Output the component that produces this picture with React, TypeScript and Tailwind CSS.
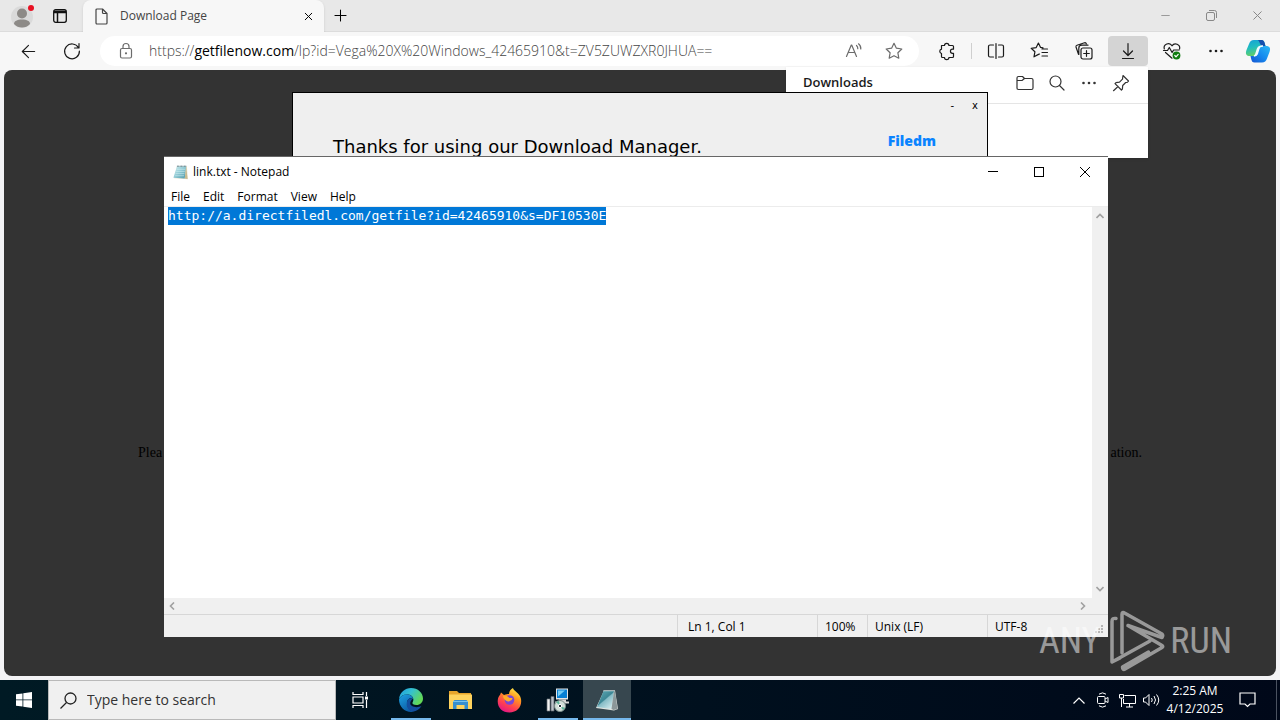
import { useEffect, useRef } from "react";
import type { ReactNode } from "react";
import { ArrowLeft, Minus, Plus, X } from "lucide-react";

type IconProps = { children: ReactNode; size?: number; width?: number; className?: string };

function Icon({ children, size = 20, width = 1.2, className }: IconProps) {
    return (
        <svg
            width={size}
            height={size}
            viewBox="0 0 20 20"
            fill="none"
            stroke="currentColor"
            strokeWidth={width}
            strokeLinecap="round"
            strokeLinejoin="round"
            className={className}
            aria-hidden="true"
        >
            {children}
        </svg>
    );
}

function ToolButton({ label, active, children }: { label: string; active?: boolean; children: ReactNode }) {
    return (
        <button
            aria-label={label}
            className={`flex h-[30px] w-10 shrink-0 items-center justify-center rounded ${active ? "bg-[#d4d4d4]" : ""}`}
        >
            {children}
        </button>
    );
}

function Dots() {
    return (
        <Icon>
            <g fill="currentColor" stroke="none">
                <circle cx="4.5" cy="10" r="1.3" />
                <circle cx="10" cy="10" r="1.3" />
                <circle cx="15.5" cy="10" r="1.3" />
            </g>
        </Icon>
    );
}

function RestoreIcon({ className }: { className?: string }) {
    return (
        <svg width="11" height="11" viewBox="0 0 11 11" fill="none" stroke="currentColor" className={className} aria-hidden="true">
            <rect x="0.5" y="2.5" width="8" height="8" rx="1.5" />
            <path d="M3 .5h5.5a2 2 0 0 1 2 2V8" />
        </svg>
    );
}

function CopilotLogo() {
    return (
        <svg width="26" height="26" viewBox="0 0 26 26" aria-hidden="true">
            <defs>
                <linearGradient id="cp1" x1="0" y1="0" x2="0.3" y2="1">
                    <stop offset="0" stopColor="#159fd8" />
                    <stop offset="0.5" stopColor="#20bdc0" />
                    <stop offset="1" stopColor="#63cf67" />
                </linearGradient>
                <linearGradient id="cp2" x1="1" y1="0" x2="0" y2="1">
                    <stop offset="0" stopColor="#2bb9f4" />
                    <stop offset="0.5" stopColor="#168bef" />
                    <stop offset="1" stopColor="#1454d1" />
                </linearGradient>
            </defs>
            <path d="M16.500 2c2 0 2.700 1.300 3.300 3.600L20.500 8h-3.200c-2.100 0-2.900 1-3.500 3l-1.500 4.500C11.500 17.500 10 18 7.500 18H5c-3.500 0-5-2-3.500-6L4 6c1-2.800 2.200-4 5-4Z" fill="url(#cp1)" />
            <path d="M9.500 24.500c-2 0-2.700-1.300-3.300-3.600L5.500 18h3.200c2.100 0 2.900-1 3.500-3l1.500-4.500c.8-2 2.200-2.500 4.800-2.500H21c3.500 0 5 2 3.500 6L22 20.500c-1 2.800-2.200 4-5 4Z" fill="url(#cp2)" />
            <path d="M9 2h7.500c2 0 2.700 1.300 3.300 3.600L20.500 8h-3.200c-2.500 0-2.500-6-5-6Z" fill="#164fae" />
            <path d="M15 8.500c1-.5 2-.5 3-.5h-1c-2 0-2.700 1-3.300 3l-1.500 5c-.6 1.500-1.600 2-3.200 2 1.500-.5 1.700-1.500 2.200-3l1.300-4c.4-1.300 1.200-2.200 2.500-2.500Z" fill="#f1fcff" stroke="#f1fcff" strokeWidth="1.500" />
        </svg>
    );
}

function TabStrip() {
    return (
        <div className="flex h-8 shrink-0 items-stretch border-b border-[#dcdcdc] bg-[#e8e8e8]">
            <button aria-label="Profile" className="flex w-11 items-center justify-center">
                <svg width="24" height="24" viewBox="0 0 24 24" aria-hidden="true">
                    <circle cx="12" cy="13" r="11" fill="#dadada" />
                    <circle cx="12" cy="9.500" r="5" fill="#8d8a87" />
                    <path d="M4 20c0-3 3-4.500 8-4.500s8 1.500 8 4.500c-2 2.500-5 3.500-8 3.500S6 22.500 4 20Z" fill="#8d8a87" />
                    <circle cx="21" cy="4" r="3" fill="#e81123" />
                </svg>
            </button>
            <button aria-label="Tab actions" className="flex w-8 items-center justify-center">
                <svg width="14" height="14" viewBox="0 0 14 14" fill="none" stroke="#111" strokeWidth="1.300" aria-hidden="true">
                    <rect x="0.700" y="0.700" width="12.600" height="12.600" rx="2" />
                    <path d="M1 2.300h12M1 3.500h12M4.500 4v9" strokeWidth="1.500" />
                </svg>
            </button>
            <div className="-mb-px ml-[7px] flex w-[241px] items-center rounded-t-lg bg-[#f7f7f7] pl-3 shadow-sm">
                <svg width="13" height="17" viewBox="0 0 13 17" fill="none" stroke="#444" strokeWidth="1.200" strokeLinejoin="round" aria-hidden="true">
                    <path d="M2 1h5.500L12 5.500V15a1 1 0 0 1-1 1H2a1 1 0 0 1-1-1V2a1 1 0 0 1 1-1Z" />
                    <path d="M7.500 1v3.500a1 1 0 0 0 1 1H12" />
                </svg>
                <span className="ml-3 flex-1 text-xs text-[#444]">Download Page</span>
                <button aria-label="Close tab" className="flex w-8 items-center justify-center">
                    <X size={13} strokeWidth={1.8} />
                </button>
            </div>
            <button aria-label="New tab" className="flex w-8 items-center justify-center">
                <Plus size={19} strokeWidth={1.3} />
            </button>
            <div className="flex-1" />
            <button aria-label="Minimize browser" className="flex w-[46px] items-center justify-center text-[#888]">
                <Minus size={13} strokeWidth={1.5} />
            </button>
            <button aria-label="Restore browser" className="flex w-[46px] items-center justify-center text-[#888]">
                <RestoreIcon />
            </button>
            <button aria-label="Close browser" className="flex w-[46px] items-center justify-center text-[#888]">
                <X size={15} strokeWidth={1.6} />
            </button>
        </div>
    );
}

function Toolbar() {
    return (
        <div className="flex h-[38px] shrink-0 items-center gap-1 bg-[#f7f7f7] pr-1 pl-2 text-[#1b1b1b]">
            <ToolButton label="Back">
                <ArrowLeft size={21} strokeWidth={1.3} />
            </ToolButton>
            <ToolButton label="Refresh">
                <Icon>
                    <path d="M16.500 6.800A7.400 7.400 0 1 0 17.400 10M17 2.500v4.500h-4.500" />
                </Icon>
            </ToolButton>
            <div className="mx-1 flex h-[30px] flex-1 items-center rounded-full bg-white pr-[11px] pl-4 text-[#6c6c6c]">
                <Icon>
                    <rect x="4.500" y="7.500" width="11" height="9.500" rx="1.500" />
                    <path d="M7 7.500V5.500a3 3 0 0 1 6 0v2" />
                    <circle cx="10" cy="12.300" r=".5" fill="currentColor" />
                </Icon>
                <a href="#address" className="ml-[13px] flex-1 text-sm font-light whitespace-nowrap text-[#444]">
                    https://<span className="font-normal text-black">getfilenow.com</span>/lp?id=Vega%20X%20Windows_42465910&amp;t=ZV5ZUWZXR0JHUA==
                </a>
                <button aria-label="Read aloud" className="mr-5">
                    <Icon>
                        <path d="M2.500 15.500 7.300 4h.4l4.800 11.500M4.200 11.500h6.600M12.500 4.500a4 4 0 0 1 1.300 3.200M14.500 2.800a6 6 0 0 1 2.300 5.200" />
                    </Icon>
                </button>
                <button aria-label="Add to favorites" className="mr-1">
                    <Icon>
                        <path d="m10 2.300 2.400 4.900 5.400.8-3.900 3.800.9 5.400-4.800-2.500-4.800 2.500.9-5.400L2.200 8l5.400-.8Z" />
                    </Icon>
                </button>
            </div>
            <ToolButton label="Extensions">
                <Icon>
                    <path d="M4.500 4.500H7.500a2.200 2.200 0 0 1 4.400 0h3.600a1 1 0 0 1 1 1v2.700h-1a2 2 0 0 0 0 4.100h1v3.200a1 1 0 0 1-1 1h-3.600a2.200 2.200 0 0 1-4.400 0H5.500a1 1 0 0 1-1-1v-3a2.200 2.200 0 0 1 0-4.300Z" />
                </Icon>
            </ToolButton>
            <div className="h-4 w-px bg-[#cfcfcf]" />
            <ToolButton label="Split screen">
                <Icon>
                    <path d="M7.500 4H4a1.500 1.500 0 0 0-1.500 1.500v9A1.500 1.500 0 0 0 4 16h3.500M12.500 4H16a1.500 1.500 0 0 1 1.500 1.500v9A1.500 1.500 0 0 1 16 16h-3.500M10 2.500v15" />
                </Icon>
            </ToolButton>
            <ToolButton label="Favorites">
                <Icon>
                    <path d="M12 8h5.500M12 11.500h5.500M12 15h5.500M13 6.800l-2.400-.4-2.200-4.300-2.200 4.500-5 .7 3.700 3.500-.9 5 4.500-2.400L9.500 13" />
                </Icon>
            </ToolButton>
            <ToolButton label="Collections">
                <Icon>
                    <rect x="7" y="7" width="11" height="11" rx="2" />
                    <path d="M12.500 9.700v5.600M9.700 12.500h5.600M4.500 13.200 2 6a1.500 1.500 0 0 1 1-1.800L10.500 1.800a1.500 1.500 0 0 1 1.800 1M4.800 13.500V7.200a3 3 0 0 1 3-3H14" />
                </Icon>
            </ToolButton>
            <ToolButton label="Downloads" active>
                <Icon>
                    <path d="M10 2.500v12M5.500 10l4.500 4.500 4.500-4.500M4.500 17.500h11" />
                </Icon>
            </ToolButton>
            <ToolButton label="Browser essentials">
                <Icon>
                    <path d="M2.300 8A4.200 4.200 0 0 1 10 4.800 4.200 4.200 0 0 1 17.600 8M1.500 9.500h4l1.800-3 2.800 5 1.500-2.500h5.500M3.500 11.500l6.500 5.700" />
                    <circle cx="14.500" cy="14.500" r="3.900" fill="#107c10" stroke="none" />
                    <path d="m12.800 14.500 1.200 1.300 2.200-2.400" stroke="white" />
                </Icon>
            </ToolButton>
            <ToolButton label="Settings and more">
                <Dots />
            </ToolButton>
            <button aria-label="Copilot" className="flex h-[30px] w-9 items-center justify-center">
                <CopilotLogo />
            </button>
        </div>
    );
}

function DownloadsPanel() {
    return (
        <section className="absolute top-[67px] right-[132px] h-[91px] w-[362px] bg-white text-[#333] shadow">
            <header className="flex h-[37px] items-center border-b border-[#e5e5e5] px-[17px] pb-1">
                <h2 className="flex-1 text-[13px] font-semibold text-[#1b1b1b]">Downloads</h2>
                <div className="flex gap-3">
                    <button aria-label="Open downloads folder">
                        <Icon>
                            <path d="M2 5a1.500 1.500 0 0 1 1.500-1.500h4L9.500 5.500h7A1.500 1.500 0 0 1 18 7v8a1.500 1.500 0 0 1-1.500 1.500h-13A1.500 1.500 0 0 1 2 15ZM2 7.500h5l2.500-2" />
                        </Icon>
                    </button>
                    <button aria-label="Search downloads">
                        <Icon>
                            <circle cx="8.500" cy="8.500" r="5.500" />
                            <path d="m12.500 12.500 4.500 4.500" />
                        </Icon>
                    </button>
                    <button aria-label="More options">
                        <Dots />
                    </button>
                    <button aria-label="Pin downloads">
                        <Icon>
                            <path d="m12 2.500 5.500 5.500-1.300 1.300-1.500.2-3 3-.3 3.500-1 1L4 10.600l1-1 3.500-.4 3-3 .2-1.700ZM7 13.500l-4.500 4.200" />
                        </Icon>
                    </button>
                </div>
            </header>
        </section>
    );
}

function DownloadManager() {
    return (
        <section className="absolute top-[92px] left-[292px] h-80 w-[696px] border border-black bg-[#efefef] text-black">
            <div className="flex h-6 items-center justify-end gap-[18px] pr-[9px] font-['DejaVu_Sans'] text-[10px]">
                <button aria-label="Minimize download manager">-</button>
                <button aria-label="Close download manager">x</button>
            </div>
            <div className="flex items-start justify-between pt-3 pr-[51px] pl-10">
                <h1 className="pt-1 font-['DejaVu_Sans'] text-lg leading-7">Thanks for using our Download Manager.</h1>
                <span className="font-['Open_Sans'] text-sm leading-6 font-extrabold text-[#0a84ff]">Filedm</span>
            </div>
        </section>
    );
}

function NotepadIcon({ size }: { size: number }) {
    return (
        <svg width={size} height={size} viewBox="0 0 24 24" aria-hidden="true">
            <defs>
                <linearGradient id="pad" x1="0" y1="0" x2="1" y2="1">
                    <stop offset="0" stopColor="#d5f0f3" />
                    <stop offset="0.500" stopColor="#8dc8d3" />
                    <stop offset="1" stopColor="#4d97a8" />
                </linearGradient>
            </defs>
            <path d="M7 3h14l1.500 18.500L3 20Z" fill="#e9e2cf" />
            <path d="M7 3h13l-2 17.500L2 19.500Z" fill="url(#pad)" />
            <path d="m20 3 2 18-4-.5Z" fill="#c7b98e" />
            <path d="M6.500 7.500h12M6 10.500h12M5 13.500h12.500M4.500 16.500H17" stroke="#d9f2f5" strokeWidth="0.700" />
            <path d="M7 3.200h14" stroke="#69828a" strokeWidth="2" strokeDasharray="1 1" />
        </svg>
    );
}

function NotepadTaskIcon() {
    return (
        <svg width="24" height="24" viewBox="0 0 24 24" aria-hidden="true">
            <defs>
                <linearGradient id="padTask" x1="0" y1="0" x2="0.800" y2="1">
                    <stop offset="0" stopColor="#63adb8" />
                    <stop offset="0.500" stopColor="#3d8795" />
                    <stop offset="0.550" stopColor="#86bcc6" />
                    <stop offset="1" stopColor="#d2eaee" />
                </linearGradient>
            </defs>
            <path d="M9 2.500h11l3 18.500-4 1.500L1 20Z" fill="#dfe3df" />
            <path d="M8.500 3H19l-2.500 18L2 19Z" fill="url(#padTask)" />
            <path d="m19 3 1 .3L22.500 21l-4 1-2-1Z" fill="#8b9799" />
            <path d="M8.500 2.800h11" stroke="#c3d5d7" strokeWidth="1.500" strokeDasharray="1 1" />
        </svg>
    );
}

const menus = ["File", "Edit", "Format", "View", "Help"];

function Chevron({ d }: { d: string }) {
    return (
        <svg width="8" height="8" viewBox="0 0 8 8" fill="none" stroke="#a0a0a0" strokeWidth="1.600" aria-hidden="true">
            <path d={d} />
        </svg>
    );
}

function Notepad() {
    const editor = useRef<HTMLTextAreaElement>(null);

    useEffect(() => {
        editor.current?.focus();
        editor.current?.select();
    }, []);

    return (
        <section className="absolute top-[156px] left-[164px] flex h-[481px] w-[944px] flex-col border-t border-[#666] bg-white text-xs text-black">
            <header className="flex h-[30px] shrink-0 items-center pl-2">
                <NotepadIcon size={17} />
                <span className="ml-1 flex-1">link.txt - Notepad</span>
                <button aria-label="Minimize" className="flex w-[46px] justify-center">
                    <svg width="10" height="10" viewBox="0 0 10 10" stroke="currentColor" aria-hidden="true">
                        <path d="M0 4.500h10" />
                    </svg>
                </button>
                <button aria-label="Maximize" className="flex w-[46px] justify-center">
                    <svg width="10" height="10" viewBox="0 0 10 10" fill="none" stroke="currentColor" aria-hidden="true">
                        <rect x="0.500" y="0.500" width="9" height="9" />
                    </svg>
                </button>
                <button aria-label="Close" className="flex w-[46px] justify-center">
                    <svg width="10" height="10" viewBox="0 0 10 10" stroke="currentColor" aria-hidden="true">
                        <path d="m0 0 10 10M10 0 0 10" />
                    </svg>
                </button>
            </header>
            <nav className="flex h-5 shrink-0 items-center gap-[13px] border-b border-[#ececec] pl-[7px]">
                {menus.map((menu) => (
                    <button key={menu}>{menu}</button>
                ))}
            </nav>
            <div className="flex min-h-0 flex-1">
                <textarea
                    ref={editor}
                    aria-label="Text editor"
                    spellCheck={false}
                    className="flex-1 resize-none pl-1 font-['DejaVu_Sans_Mono',monospace] text-[13px] leading-[18px] caret-transparent outline-none selection:bg-[#0078d7] selection:text-white"
                    defaultValue="http://a.directfiledl.com/getfile?id=42465910&s=DF10530E"
                />
                <div className="flex w-4 flex-col items-center justify-between bg-[#f0f0f0] py-[5px]">
                    <Chevron d="M.5 6 4 2.500 7.500 6" />
                    <Chevron d="M.5 2 4 5.500 7.500 2" />
                </div>
            </div>
            <div className="flex h-4 shrink-0 items-center justify-between bg-[#f0f0f0] pr-[21px] pl-1">
                <Chevron d="M6 .5 2.500 4 6 7.500" />
                <Chevron d="M2 .5 5.500 4 2 7.500" />
            </div>
            <footer className="flex h-[23px] shrink-0 items-stretch border-t border-[#d7d7d7] bg-[#f0f0f0] leading-6">
                <div className="flex-1" />
                <div className="w-[140px] border-l border-[#d7d7d7] pl-[10px]">Ln 1, Col 1</div>
                <div className="w-[50px] border-l border-[#d7d7d7] pl-[7px]">100%</div>
                <div className="w-[120px] border-l border-[#d7d7d7] pl-[7px]">Unix (LF)</div>
                <div className="flex w-[121px] items-start justify-between border-l border-[#d7d7d7] pr-1 pl-[7px]">
                    UTF-8
                    <svg width="10" height="12" viewBox="0 0 10 12" fill="#b5b5b5" className="self-end" aria-hidden="true">
                        <path d="M7 0h2v2H7zM7 3h2v2H7zM4 3h2v2H4zM7 6h2v2H7zM4 6h2v2H4zM1 6h2v2H1z" />
                    </svg>
                </div>
            </footer>
        </section>
    );
}

function Watermark() {
    return (
        <div className="pointer-events-none absolute right-12 bottom-12 flex items-center font-['Liberation_Sans_Narrow','Roboto_Condensed',sans-serif] text-4xl text-white opacity-50">
            <span>ANY</span>
            <svg width="58" height="62" viewBox="0 0 58 62" fill="none" stroke="white" strokeWidth="3.500" strokeLinejoin="round" strokeLinecap="round" className="mr-1 ml-2" aria-hidden="true">
                <path d="M14 43V4.500c0-2 1-2.500 2.500-1.500L54 24c1 1 1 2 0 3.500L20 15.500M20 15.500l34 20c1 .7 1 1.500 0 2L17 59c-1.500 1-2.500 0-2.500-2l26-15" />
                <path d="M8 8.500c-3-.5-4 .5-4 3V52l38-21M4 52l8-4" />
            </svg>
            <span>RUN</span>
        </div>
    );
}

function EdgeLogo() {
    return (
        <svg width="26" height="26" viewBox="0 0 26 26" aria-hidden="true">
            <defs>
                <linearGradient id="edgeTop" x1="0" y1="0" x2="1" y2="0.500">
                    <stop offset="0" stopColor="#1c9de0" />
                    <stop offset="0.500" stopColor="#35c1d0" />
                    <stop offset="1" stopColor="#62d957" />
                </linearGradient>
                <linearGradient id="edgeSide" x1="0" y1="0" x2="0.600" y2="1">
                    <stop offset="0" stopColor="#1da2e2" />
                    <stop offset="1" stopColor="#0c59a4" />
                </linearGradient>
            </defs>
            <path d="M1 12C2 5 7 1 13 1c7 0 12 5 12 10.500 0 4-3 6.500-6.500 6.500-3 0-4.500-1-4-2.500 1.500-2 1.500-7-4-8C6 7 2.500 9 1 12Z" fill="url(#edgeTop)" />
            <path d="M1 12.500C2 9.500 5.500 7.500 9 7.500c3.500 0 6 2 6 4.500-3-2-6 .5-6 4 0 5 4 9 8 8.300C9 27 1 21 1 12.500Z" fill="url(#edgeSide)" />
            <path d="M9.500 13.500C6.500 20 12 26 17.500 24c3-1 5-3.500 6-5.300-3 2-7 1.800-9.500.3-2.500-1.500-2.300-4.500.5-7-1.500-1-4-.5-5 1.500Z" fill="#134e9f" />
        </svg>
    );
}

function FolderLogo() {
    return (
        <svg width="23" height="20" viewBox="0 0 23 20" aria-hidden="true">
            <path d="M0 1h8l2 2h12v5H0z" fill="#e8a52b" />
            <path d="M0 4.500h23V19H0z" fill="#ffd35e" />
            <path d="M4 19v-7.500l1.500-1.500h12l1.500 1.500V19h-3.500v-4h-8v4z" fill="#378fcf" />
            <path d="M4 12h15v-1H4z" fill="#77c3ee" />
        </svg>
    );
}

function FirefoxLogo() {
    return (
        <svg width="25" height="25" viewBox="0 0 25 25" aria-hidden="true">
            <defs>
                <linearGradient id="fox" x1="0.800" y1="0" x2="0.300" y2="1">
                    <stop offset="0" stopColor="#fff04a" />
                    <stop offset="0.350" stopColor="#ff9820" />
                    <stop offset="0.700" stopColor="#ff4150" />
                    <stop offset="1" stopColor="#e31587" />
                </linearGradient>
            </defs>
            <path d="M4 4.500 7 7c2-1 3.500-1 5-1 0-3 2-5 4-6 0 3 7 4.500 8 11 1.300 8-4 13.500-11.500 13.500S0 19 .8 12c.2-2.500 1.200-4 2.200-5Z" fill="url(#fox)" />
            <circle cx="12.500" cy="12" r="4.800" fill="#7b45d6" />
            <path d="M6 7.500c3-.5 5.500 1 6.500 2.500h3c0 2-2 2.500-3.500 3.500-2 0-6-2-6-6Z" fill="#ffac28" />
        </svg>
    );
}

function InstallerLogo() {
    return (
        <svg width="24" height="24" viewBox="0 0 24 24" aria-hidden="true">
            <path d="M10 .5h12v11H10z" fill="#e5e5e5" />
            <path d="M11 1.500h10v8.500H11z" fill="#087fd3" />
            <path d="M12 2.500h7l-7 6z" fill="#72cbf4" />
            <path d="M13 11.500h7v2h3v2H9v-2h4z" fill="#d8d8d8" />
            <path d="M1 11h3v12H1z" fill="#f2f2f2" stroke="#6a727a" strokeWidth="0.700" />
            <path d="M5 8.500h3V23H5z" fill="#b9bfc8" stroke="#5c646c" strokeWidth="0.700" />
            <circle cx="14" cy="18" r="5.500" fill="#d2dfda" stroke="#7c8e8b" />
            <path d="m14 18-4-4 3-1zM14 18l5 2-2 2z" fill="#5cb69b" />
            <circle cx="14" cy="18" r="1.700" fill="#26343c" stroke="white" />
        </svg>
    );
}

const apps = [
    { name: "Microsoft Edge", icon: <EdgeLogo />, running: true },
    { name: "File Explorer", icon: <FolderLogo /> },
    { name: "Firefox", icon: <FirefoxLogo /> },
    { name: "Setup", icon: <InstallerLogo />, running: true },
    { name: "Notepad", icon: <NotepadTaskIcon />, running: true, active: true },
];

function Taskbar() {
    return (
        <footer className="flex h-10 shrink-0 items-stretch bg-linear-to-r from-[#001a24] to-[#000819] text-white">
            <button aria-label="Start" className="flex w-12 items-center justify-center">
                <svg width="16" height="16" viewBox="0 0 16 16" fill="white" aria-hidden="true">
                    <path d="m0 2.300 6.500-.9v6.100H0zM7.300 1.300 16 0v7.500H7.300zM0 8.300h6.500v6.300L0 13.700zM7.300 8.300H16V16l-8.700-1.200z" />
                </svg>
            </button>
            <label className="flex w-72 items-center border border-[#b9b9b9] bg-[#f0f0f0] pl-[11px] text-[#222]">
                <svg width="17" height="17" viewBox="0 0 17 17" fill="none" stroke="currentColor" strokeWidth="1.300" aria-hidden="true">
                    <circle cx="10.500" cy="6.500" r="5.500" />
                    <path d="m6.500 10.500-6 6" />
                </svg>
                <input
                    type="text"
                    aria-label="Type here to search"
                    placeholder="Type here to search"
                    className="ml-[10px] min-w-0 flex-1 text-sm outline-none placeholder:text-[#333]"
                />
            </label>
            <button aria-label="Task view" className="mr-[3px] flex w-12 items-center justify-center">
                <svg width="17" height="16" viewBox="0 0 17 16" fill="none" stroke="white" strokeWidth="1.200" aria-hidden="true">
                    <path d="M1 0v2.500h10V0M1 16v-2.500h10V16M1 5h10v6H1zM14.500 0v4M14.500 8v8" />
                    <path d="M13 4.500h3v3h-3z" fill="white" stroke="none" />
                </svg>
            </button>
            <div className="flex gap-px">
                {apps.map((app) => (
                    <button
                        key={app.name}
                        aria-label={app.name}
                        className={`relative flex w-12 items-center justify-center ${app.active ? "bg-[#37474f]" : ""}`}
                    >
                        {app.icon}
                        {app.running && (
                            <span className={`absolute bottom-0 h-0.5 bg-[#76b9ed] ${app.active ? "inset-x-0" : "inset-x-1"}`} />
                        )}
                    </button>
                ))}
            </div>
            <div className="flex-1" />
            <div className="flex items-center">
                <button aria-label="Show hidden icons" className="flex w-6 justify-center">
                    <svg width="12" height="7" viewBox="0 0 12 7" fill="none" stroke="white" strokeWidth="1.200" aria-hidden="true">
                        <path d="m.5 6.500 5.500-5.500 5.500 5.500" />
                    </svg>
                </button>
                <button aria-label="Meet now" className="flex w-6 justify-center">
                    <svg width="12" height="16" viewBox="0 0 12 16" fill="none" stroke="white" aria-hidden="true">
                        <rect x="0.500" y="4.500" width="7.500" height="7" rx="1" />
                        <path d="m8 7 3-1.500v5L8 9M2 2.200Q5.500-.5 9 2.200M2 13.800q3.500 2.700 7 0" />
                    </svg>
                </button>
                <button aria-label="Network" className="flex w-6 justify-center">
                    <svg width="17" height="15" viewBox="0 0 17 15" fill="none" stroke="white" aria-hidden="true">
                        <path d="M5.500 2.500h11v8h-12V6M10.500 10.500V14M7 14h7M.5 1.500h4V5h-4zM2.500 5v9" />
                    </svg>
                </button>
                <button aria-label="Volume" className="flex w-6 justify-center">
                    <svg width="17" height="14" viewBox="0 0 17 14" fill="none" stroke="white" aria-hidden="true">
                        <path d="M.5 5h2L6 1.500v11L2.500 9h-2zM8.500 5q1.500 2 0 4M11 3q3 4 0 8M13.500 1.500q4.500 5.500 0 11" />
                    </svg>
                </button>
                <button className="w-16 text-center text-xs leading-[18px]">
                    2:25 AM
                    <br />
                    4/12/2025
                </button>
                <button aria-label="Notifications" className="flex w-10 justify-center">
                    <svg width="17" height="16" viewBox="0 0 17 16" fill="none" stroke="white" strokeWidth="1.200" aria-hidden="true">
                        <path d="M1 1h15v11h-5L8.500 14.500 6 12H1z" />
                    </svg>
                </button>
            </div>
            <div className="mr-[3px] ml-[9px] w-px bg-[#4a5260]" />
        </footer>
    );
}

export default function App() {
    return (
        <div className="relative flex h-screen w-full flex-col overflow-hidden bg-[#f3f3f5] font-['Open_Sans',sans-serif]">
            <TabStrip />
            <Toolbar />
            <main className="mx-1 mb-1 flex flex-1 items-center justify-between rounded-lg bg-[#333] px-[134px] pt-40 font-['Liberation_Serif',serif] text-sm text-black">
                <span>Plea</span>
                <span>ation.</span>
            </main>
            <Taskbar />
            <DownloadsPanel />
            <DownloadManager />
            <Notepad />
            <Watermark />
        </div>
    );
}
